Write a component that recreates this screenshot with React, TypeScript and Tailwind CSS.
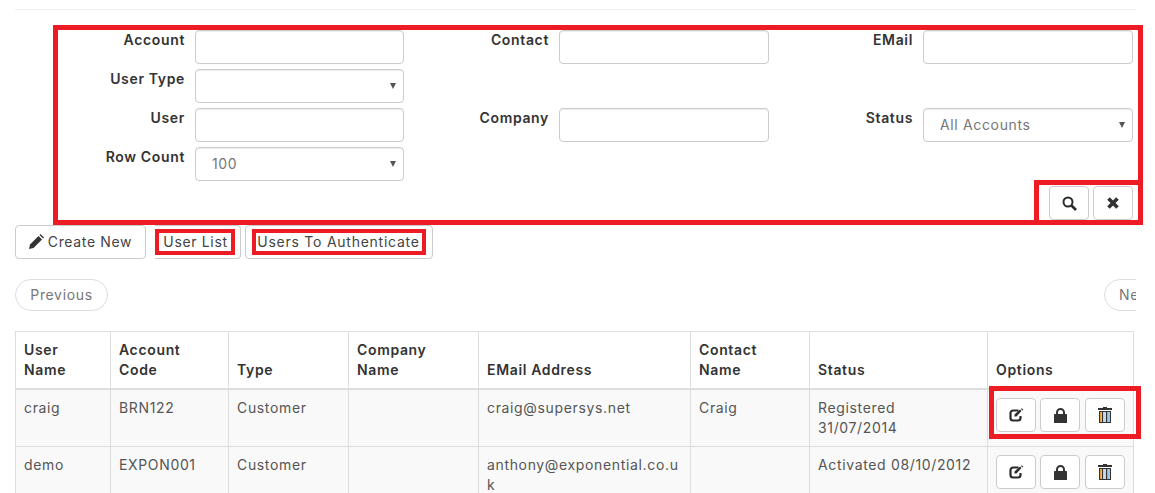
const inputClass = "h-[34px] w-full rounded border border-[#ccc] bg-white shadow-[inset_0_1px_1px_rgba(0,0,0,0.075)]";
const labelClass = "text-right text-[14px] leading-[20px] font-semibold text-[#333]";
const btnClass = "flex h-[34px] items-center justify-center rounded border border-[#ccc] bg-white text-[14px] text-[#444]";

const Label = ({ text }: { text: string }) => <label className={labelClass}>{text}</label>;

const Select = ({ value }: { value?: string }) => (
    <div className="relative">
        <select className={`${inputClass} appearance-none pb-[2px] pl-[16px] text-[14px] text-[#777]`} defaultValue={value}>
            <option>{value}</option>
        </select>
        <svg className="absolute top-[14px] right-[8px] h-[6px] w-[6px]" viewBox="0 0 6 6" fill="#555">
            <path d="M0 0h6L3 6z" />
        </svg>
    </div>
);

const PencilIcon = () => (
    <svg width="15" height="15" viewBox="0 0 15 15" fill="#333">
        <path d="M0 15l1-4.500L9.500 2 13 5.500 4.500 14z" />
        <path d="M10.500 1l1-1L15 3.500l-1 1z" />
    </svg>
);

const SearchIcon = () => (
    <svg width="15" height="15" viewBox="0 0 15 15" fill="none" stroke="#2b2b2b">
        <circle cx="6" cy="6" r="4.500" strokeWidth="2" />
        <path d="M9.500 9.500 14 14" strokeWidth="2.600" />
    </svg>
);

const CloseIcon = () => (
    <svg width="12" height="12" viewBox="0 0 12 12" fill="none" stroke="#333" strokeWidth="3.600">
        <path d="M1.500 1.500l9 9M10.500 1.500l-9 9" />
    </svg>
);

const EditIcon = () => (
    <svg width="15" height="14" viewBox="0 0 15 14" fill="none">
        <path d="M9.500 2.500H4A2.500 2.500 0 0 0 1.500 5v5A2.500 2.500 0 0 0 4 12.500h5A2.500 2.500 0 0 0 11.500 10V8" stroke="#2b2b2b" strokeWidth="2.200" />
        <path d="M5.500 6.500 11 1.500l1.500 1.500L7.500 8.500H5.500z" fill="#2b2b2b" />
        <path d="M12 1l.8-.8 1.500 1.500-.8.800z" fill="#2b2b2b" />
    </svg>
);

const LockIcon = () => (
    <svg width="13" height="15" viewBox="0 0 13 15" fill="#333">
        <path d="M3 7V4.500a3.500 3.500 0 0 1 7 0V7" fill="none" stroke="#333" strokeWidth="2" />
        <rect x="0" y="6" width="13" height="9" rx="0.500" />
    </svg>
);

// striped body, the stripes carry the orange/blue fringe of the screenshot
const TrashIcon = () => (
    <svg width="14" height="16" viewBox="0 0 14 16" shapeRendering="crispEdges">
        <path d="M5 0h4v1h5v2H0V1h5z" fill="#333" />
        <rect x="1" y="4" width="12" height="12" fill="#333" />
        <rect x="2" y="5" width="1" height="10" fill="#e0a040" />
        <rect x="3" y="5" width="1" height="10" fill="#9cc8ea" />
        <rect x="5" y="5" width="1" height="10" fill="#e8c890" />
        <rect x="6" y="5" width="2" height="10" fill="#c8d8e8" />
        <rect x="9" y="5" width="1" height="10" fill="#e0a040" />
        <rect x="10" y="5" width="2" height="10" fill="#9cc8ea" />
    </svg>
);

const OptionButtons = () => (
    <div className="flex">
        <button className={`${btnClass} w-[40px]`}><EditIcon /></button>
        <button className={`${btnClass} ml-[4px] w-[40px]`}><LockIcon /></button>
        <button className={`${btnClass} ml-[5px] w-[40px]`}><TrashIcon /></button>
    </div>
);

const headers = [
    ["User", "Name"],
    ["Account", "Code"],
    ["Type"],
    ["Company", "Name"],
    ["EMail Address"],
    ["Contact", "Name"],
    ["Status"],
    ["Options"],
];

const rows = [
    ["craig", "BRN122", "Customer", "", "craig@supersys.net", "Craig", "Registered\n31/07/2014"],
    ["demo", "EXPON001", "Customer", "", "anthony@exponential.co.uk", "", "Activated 08/10/2012"],
];

const widths = ["w-[95px]", "w-[118px]", "w-[120px]", "w-[130px]", "w-[212px]", "w-[119px]", "w-[178px]", "w-[146px]"];

export default function App() {
    return (
        <div className="h-[493px] w-[1155px] overflow-hidden bg-white font-['Inter',sans-serif] tracking-[0.65px] text-[#555]">
            <div className="relative ml-[15px] w-[1121px]">
                <div className="h-[10px] border-b border-[#eee]" />

                {/* filter form */}
                <div className="mt-[20px] grid grid-cols-[170px_209px_135px_210px_134px_210px] gap-x-[10px] gap-y-[5px]">
                    <Label text="Account" />
                    <input className={inputClass} />
                    <Label text="Contact" />
                    <input className={inputClass} />
                    <Label text="EMail" />
                    <input className={inputClass} />

                    <Label text="User Type" />
                    <Select />
                    <div className="col-span-4" />

                    <Label text="User" />
                    <input className={inputClass} />
                    <Label text="Company" />
                    <input className={inputClass} />
                    <Label text="Status" />
                    <Select value="All Accounts" />

                    <Label text="Row Count" />
                    <Select value="100" />
                    <div className="col-span-4" />
                </div>

                <div className="mt-[5px] flex justify-end gap-[4px] pr-[3px]">
                    <button className={`${btnClass} w-[40px]`}><SearchIcon /></button>
                    <button className={`${btnClass} w-[40px]`}><CloseIcon /></button>
                </div>

                <div className="mt-[5px] flex">
                    <button className={`${btnClass} w-[131px] gap-[4px] pb-[2px]`}><PencilIcon />Create New</button>
                    <button className={`${btnClass} ml-[9px] w-[86px] rounded-l-none border-l-0 pr-[4px] pb-[2px]`}>User List</button>
                    <button className={`${btnClass} ml-[4px] w-[188px] pr-[1px] pb-[2px] tracking-[0.75px]`}>Users To Authenticate</button>
                </div>

                <div className="mt-[20px] flex justify-between overflow-hidden">
                    <div className="flex h-[32px] w-[93px] items-center justify-center rounded-full border border-[#ddd] pb-[2px] text-[14px] text-[#777]">Previous</div>
                    <div className="-mr-[40px] flex h-[32px] w-[72px] items-center rounded-full border border-[#ddd] pb-[2px] pl-[14px] text-[14px] text-[#777]">Next</div>
                </div>

                <table className="mt-[20px] w-[1119px] table-fixed border-collapse text-[14px] leading-[20px]">
                    <thead>
                        <tr>
                            {headers.map((h, i) => (
                                <th key={i} className={`${widths[i]} border border-b-2 border-[#ddd] p-[8px] text-left align-bottom font-semibold text-[#333]`}>
                                    {h.map((line) => <div key={line}>{line}</div>)}
                                </th>
                            ))}
                        </tr>
                    </thead>
                    <tbody>
                        {rows.map((row) => (
                            <tr key={row[0]} className="bg-[#f9f9f9]">
                                {row.map((cell, i) => (
                                    <td key={i} className={`h-[57px] border border-[#ddd] p-[8px] align-top whitespace-pre-line ${i === 4 ? "break-all" : ""}`}>{cell}</td>
                                ))}
                                <td className="border border-[#ddd] p-[8px] align-top"><OptionButtons /></td>
                            </tr>
                        ))}
                    </tbody>
                </table>

                {/* red annotation boxes */}
                <div className="pointer-events-none absolute top-[25px] left-[38px] h-[200px] w-[1090px] border-[5px] border-[#ed1c24]" />
                <div className="pointer-events-none absolute top-[180px] left-[1019px] h-[45px] w-[109px] border-[5px] border-[#ed1c24]" />
                <div className="pointer-events-none absolute top-[229px] left-[140px] h-[26px] w-[80px] border-[4px] border-[#ed1c24]" />
                <div className="pointer-events-none absolute top-[229px] left-[237px] h-[26px] w-[174px] border-[4px] border-[#ed1c24]" />
                <div className="pointer-events-none absolute top-[386px] left-[974px] h-[53px] w-[152px] border-[5px] border-[#ed1c24]" />
            </div>
        </div>
    );
}
